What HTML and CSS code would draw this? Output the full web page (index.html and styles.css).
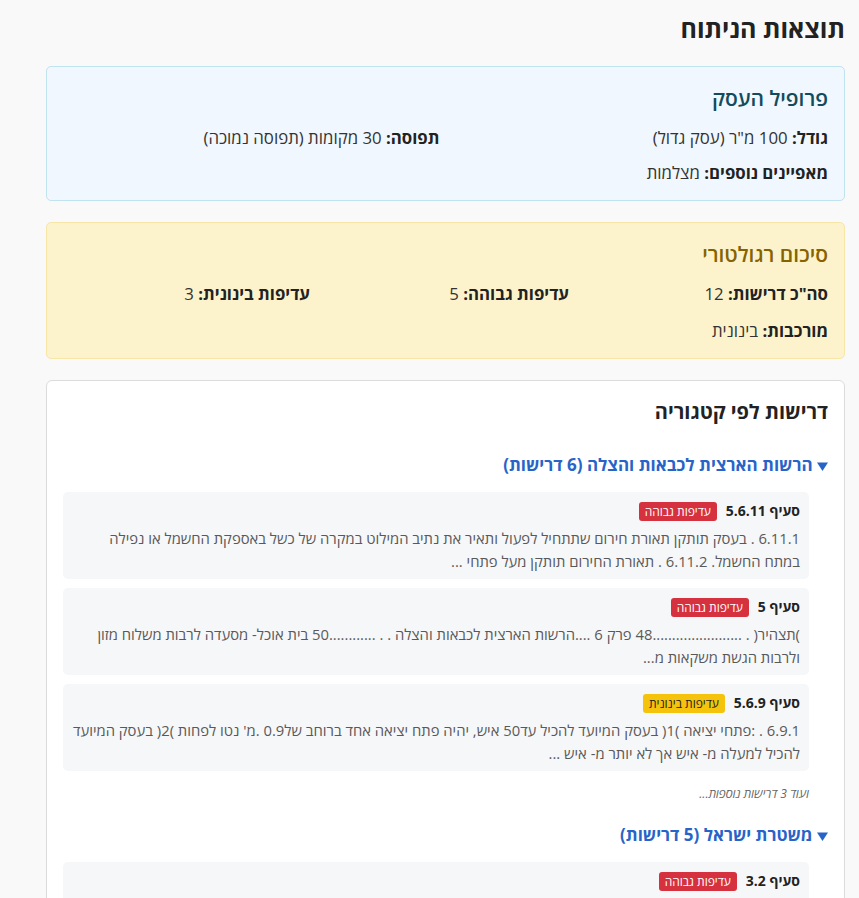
FILE: index.html
```html
<!DOCTYPE html>
<html lang="he" dir="rtl">
<head>
<meta charset="utf-8">
<title>תוצאות הניתוח</title>
<link rel="stylesheet" href="styles.css">
</head>
<body>
<main class="page">
  <h1 class="page-title">תוצאות הניתוח</h1>

  <section class="card card-profile">
    <h2 class="card-title">פרופיל העסק</h2>
    <div class="grid grid-2">
      <p class="field"><strong>גודל:</strong> 100 מ"ר (עסק גדול)</p>
      <p class="field"><strong>תפוסה:</strong> 30 מקומות (תפוסה נמוכה)</p>
    </div>
    <p class="field field-extra"><strong>מאפיינים נוספים:</strong> מצלמות</p>
  </section>

  <section class="card card-summary">
    <h2 class="card-title">סיכום רגולטורי</h2>
    <div class="grid grid-3">
      <p class="field"><strong>סה"כ דרישות:</strong> 12</p>
      <p class="field"><strong>עדיפות גבוהה:</strong> 5</p>
      <p class="field"><strong>עדיפות בינונית:</strong> 3</p>
    </div>
    <p class="field field-extra"><strong>מורכבות:</strong> בינונית</p>
  </section>

  <section class="card card-reqs">
    <h2 class="reqs-title">דרישות לפי קטגוריה</h2>

    <div class="category">
      <h3 class="cat-title"><svg class="caret" width="11" height="9" viewBox="0 0 11 9" aria-hidden="true"><path d="M0 0.5 H11 L5.5 9 Z"/></svg> הרשות הארצית לכבאות והצלה (6 דרישות)</h3>
      <div class="items">
        <article class="item">
          <div class="item-head"><span class="item-name">סעיף 5.6.11</span><span class="badge badge-high">עדיפות גבוהה</span></div>
          <p class="item-text">6.11.1 . בעסק תותקן תאורת חירום שתתחיל לפעול ותאיר את נתיב המילוט במקרה של כשל באספקת החשמל או נפילה במתח החשמל. 6.11.2 . תאורת החירום תותקן מעל פתחי ...</p>
        </article>
        <article class="item">
          <div class="item-head"><span class="item-name">סעיף 5</span><span class="badge badge-high">עדיפות גבוהה</span></div>
          <p class="item-text">)תצהיר( . .......................48 פרק 6 ....הרשות הארצית לכבאות והצלה . . ............50 בית אוכל- מסעדה לרבות משלוח מזון ולרבות הגשת משקאות מ...</p>
        </article>
        <article class="item">
          <div class="item-head"><span class="item-name">סעיף 5.6.9</span><span class="badge badge-mid">עדיפות בינונית</span></div>
          <p class="item-text">6.9.1 . :פתחי יציאה )1( בעסק המיועד להכיל עד50 איש, יהיה פתח יציאה אחד ברוחב של0.9 .מ' נטו לפחות )2( בעסק המיועד להכיל למעלה מ- איש אך לא יותר מ- איש ...</p>
        </article>
        <p class="more">ועוד 3 דרישות נוספות...</p>
      </div>
    </div>

    <div class="category">
      <h3 class="cat-title"><svg class="caret" width="11" height="9" viewBox="0 0 11 9" aria-hidden="true"><path d="M0 0.5 H11 L5.5 9 Z"/></svg> משטרת ישראל (5 דרישות)</h3>
      <div class="items">
        <article class="item">
          <div class="item-head"><span class="item-name">סעיף 3.2</span><span class="badge badge-high">עדיפות גבוהה</span></div>
          <p class="item-text">בעסק יותקנו מצלמות אבטחה במעגל סגור המכסות את הכניסה לעסק ...</p>
        </article>
      </div>
    </div>
  </section>
</main>
</body>
</html>
```
FILE: styles.css
```css
* { box-sizing: border-box; }

html, body {
  margin: 0;
  padding: 0;
  background: #f9f9f9;
}

body {
  font-family: "Open Sans", "DejaVu Sans", sans-serif;
  color: #222;
  direction: rtl;
}

.page {
  padding: 10px 14px 20px 46px;
}

.page-title {
  margin: 0 0 20px;
  font-size: 25px;
  font-weight: 700;
  line-height: 36px;
  color: #222;
}

.card {
  border-radius: 5px;
  border: 1px solid #ddd;
  margin-bottom: 21px;
}

.card-profile {
  background: #f0f7fe;
  border-color: #bfe3ef;
  padding: 16px 16px 15px;
}

.card-summary {
  background: #fcf3cc;
  border-color: #f8e6a6;
  padding: 16px 16px 15px;
}

.card-title {
  margin: 0 0 13px;
  font-size: 21px;
  font-weight: 600;
  line-height: 30px;
}

.card-profile .card-title { color: #124c5c; }
.card-summary .card-title { color: #866300; }

.grid {
  display: grid;
  column-gap: 12px;
}
.grid-2 { grid-template-columns: 1fr 1fr; }
.grid-3 { grid-template-columns: 1fr 1fr 1fr; }

.field {
  margin: 0;
  font-size: 16.8px;
  line-height: 24px;
  color: #333;
}
.field strong { color: #222; font-weight: 700; }

.field-extra { margin-top: 11px; }
.card-summary .field-extra { margin-top: 13px; }

.card-reqs {
  background: #fff;
  border-color: #dcdcdc;
  padding: 16px 16px 0;
  border-radius: 6px;
  margin-bottom: 0;
}

.reqs-title {
  margin: 0 0 26px;
  font-size: 20px;
  font-weight: 700;
  line-height: 30px;
  color: #222;
}

.category { margin-bottom: 20px; }

.cat-title {
  margin: 0 0 15px;
  font-size: 17px;
  font-weight: 700;
  line-height: 24px;
  color: #2864c8;
}
.caret {
  fill: #2864c8;
  vertical-align: 0;
}

.items {
  margin-right: 19px;
}

.item {
  background: #f6f7f9;
  border-radius: 5px;
  padding: 9px 9px 6px;
  margin-bottom: 9px;
}

.item-head {
  display: flex;
  align-items: center;
  gap: 9px;
  margin-bottom: 6px;
  height: 20px;
}

.item-name {
  font-size: 14px;
  font-weight: 700;
  color: #222;
  line-height: 20px;
}

.badge {
  font-size: 12px;
  line-height: 19px;
  padding: 0 6px;
  border-radius: 3px;
}
.badge-high { background: #d6313f; color: #fff; }
.badge-mid { background: #f5c20c; color: #222; }

.item-text {
  margin: 0;
  font-size: 14.8px;
  line-height: 23px;
  color: #595959;
}

.more {
  margin: 14px 0 0;
  font-size: 12px;
  font-style: italic;
  color: #666;
  line-height: 18px;
}
```
